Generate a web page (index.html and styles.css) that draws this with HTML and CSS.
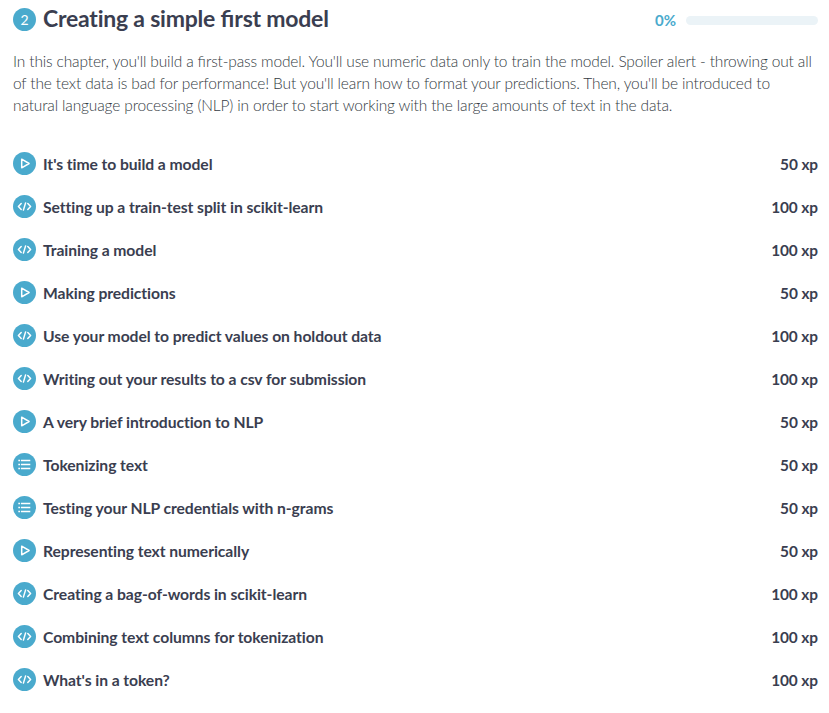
FILE: index.html
```html
<!DOCTYPE html>
<html lang="en">
<head>
<meta charset="utf-8">
<title>Creating a simple first model</title>
<link rel="stylesheet" href="styles.css">
</head>
<body>
<svg class="sprite" aria-hidden="true">
  <symbol id="video" viewBox="0 0 23 23"><path d="M8.7 7.2v8.6l7.4-4.3z" fill="none" stroke="#fff" stroke-width="1.5" stroke-linejoin="round"/></symbol>
  <symbol id="code" viewBox="0 0 23 23"><path d="M8.2 8.6 5.4 11.5l2.8 2.9M14.8 8.6l2.8 2.9-2.8 2.9M12.6 7.9l-2.2 7.2" fill="none" stroke="#fff" stroke-width="1.5" stroke-linecap="round" stroke-linejoin="round"/></symbol>
  <symbol id="list" viewBox="0 0 23 23"><path d="M5.3 7.5h1.8M8 7.5h9.3M5.3 11.5h1.8M8 11.5h9.3M5.3 15.5h1.8M8 15.5h9.3" fill="none" stroke="#fff" stroke-width="1.5"/></symbol>
</svg>
<main class="chapter">
  <header class="head">
    <span class="badge">2</span>
    <h1 class="title">Creating a simple <span class="liga">fi</span>rst model</h1>
    <span class="percent">0%</span>
    <span class="track"></span>
  </header>
  <p class="intro">In this chapter, you'll build a <span class="liga">fi</span>rst-pass model. You'll use numeric data only to train the model. Spoiler alert - throwing out all<br>of the text data is bad for performance! But you'll learn how to format your predictions. Then, you'll be introduced to<br>natural language processing (NLP) in order to start working with the large amounts of text in the data.</p>
  <ul class="exercises">
    <li class="row"><svg class="icon"><use href="#video"/></svg><span class="name">It's time to build a model</span><span class="xp">50 xp</span></li>
    <li class="row"><svg class="icon"><use href="#code"/></svg><span class="name">Setting up a train-test split in scikit-learn</span><span class="xp">100 xp</span></li>
    <li class="row"><svg class="icon"><use href="#code"/></svg><span class="name">Training a model</span><span class="xp">100 xp</span></li>
    <li class="row"><svg class="icon"><use href="#video"/></svg><span class="name">Making predictions</span><span class="xp">50 xp</span></li>
    <li class="row"><svg class="icon"><use href="#code"/></svg><span class="name">Use your model to predict values on holdout data</span><span class="xp">100 xp</span></li>
    <li class="row"><svg class="icon"><use href="#code"/></svg><span class="name">Writing out your results to a csv for submission</span><span class="xp">100 xp</span></li>
    <li class="row"><svg class="icon"><use href="#video"/></svg><span class="name">A very brief introduction to NLP</span><span class="xp">50 xp</span></li>
    <li class="row"><svg class="icon"><use href="#list"/></svg><span class="name">Tokenizing text</span><span class="xp">50 xp</span></li>
    <li class="row"><svg class="icon"><use href="#list"/></svg><span class="name">Testing your NLP credentials with n-grams</span><span class="xp">50 xp</span></li>
    <li class="row"><svg class="icon"><use href="#video"/></svg><span class="name">Representing text numerically</span><span class="xp">50 xp</span></li>
    <li class="row"><svg class="icon"><use href="#code"/></svg><span class="name">Creating a bag-of-words in scikit-learn</span><span class="xp">100 xp</span></li>
    <li class="row"><svg class="icon"><use href="#code"/></svg><span class="name">Combining text columns for tokenization</span><span class="xp">100 xp</span></li>
    <li class="row"><svg class="icon"><use href="#code"/></svg><span class="name">What's in a token?</span><span class="xp">100 xp</span></li>
  </ul>
</main>
</body>
</html>
```
FILE: styles.css
```css
body { margin: 0; background: #fff; color: #3a3e50; font-family: Lato, sans-serif; }
.sprite { display: none; }
.chapter { padding: 0 11px 0 13px; }
.head { display: flex; align-items: center; height: 39px; }
.badge { width: 23px; height: 23px; border-radius: 50%; background: #4aaacd; color: #fff; font-size: 14px; line-height: 23px; text-align: center; }
.title { flex: 1; margin: 0 0 3px 7px; font-size: 23px; line-height: 36px; font-weight: 700; letter-spacing: -0.22px; white-space: nowrap; }
.liga { letter-spacing: 0; }
.percent { margin-right: 10px; color: #4aaacd; font-size: 15px; font-weight: 700; line-height: 22px; }
.track { width: 132px; height: 9px; border-radius: 5px; margin-top: 2px; background: #ebf3f7; }
.intro { margin: 11px 0 26px; color: #343b43; font-size: 15.5px; font-weight: 300; line-height: 22px; letter-spacing: -0.145px; white-space: nowrap; }
.exercises { margin: 0; padding: 0; list-style: none; }
.row { display: flex; align-items: center; height: 43px; font-size: 15.7px; font-weight: 700; letter-spacing: -0.07px; }
.icon { width: 23px; height: 23px; border-radius: 50%; background: #4aaacd; }
.name { flex: 1; margin-left: 7px; }
.xp { font-size: 15.4px; letter-spacing: -0.08px; white-space: nowrap; }
```
